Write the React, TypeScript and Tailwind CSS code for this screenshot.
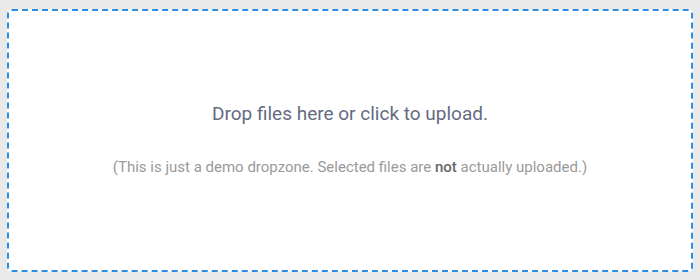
export default function App() {
  return (
    <div className="w-[700px] h-[280px] bg-[#e9e9e9] pt-[9px] pb-[8px] px-[7px] font-['Roboto',sans-serif]">
      <div className="h-full w-full rounded-[5px] border-2 border-dashed border-[#2a8de8] bg-white flex flex-col items-center justify-center cursor-pointer">
        <h3 className="text-[19px] leading-[24px] text-[#646c7f] mt-[-3px]">
          Drop files here or click to upload.
        </h3>
        <span className="mt-[31px] text-[15px] leading-[20px] text-[#9a9a9a]">
          (This is just a demo dropzone. Selected files are{" "}
          <strong className="font-medium text-[#666]">not</strong> actually uploaded.)
        </span>
      </div>
    </div>
  );
}
